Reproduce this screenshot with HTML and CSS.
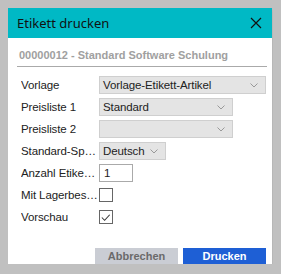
FILE: index.html
```html
<!DOCTYPE html>
<html>
<head>
  <title>Etikett drucken</title>
  <link rel="stylesheet" href="styles.css">
</head>
<body>

<div class="dialog">
  <div class="head">
    <span class="title">Etikett drucken</span>
    <svg class="close" width="12" height="12" viewBox="0 0 12 12">
      <path d="M1 1 L11 11 M11 1 L1 11" stroke="#111" stroke-width="1.2" fill="none"/>
    </svg>
  </div>

  <div class="content">
    <div class="subtitle">00000012 - Standard Software Schulung</div>

    <div class="form">
      <div class="row">
        <span class="label">Vorlage</span>
        <div class="select wide">
          <span>Vorlage-Etikett-Artikel</span>
          <svg class="chev" width="8" height="5" viewBox="0 0 8 5"><path d="M0.5 0.5 L4 4 L7.5 0.5" stroke="#999" fill="none"/></svg>
        </div>
      </div>
      <div class="row">
        <span class="label">Preisliste 1</span>
        <div class="select mid">
          <span>Standard</span>
          <svg class="chev" width="8" height="5" viewBox="0 0 8 5"><path d="M0.5 0.5 L4 4 L7.5 0.5" stroke="#999" fill="none"/></svg>
        </div>
      </div>
      <div class="row">
        <span class="label">Preisliste 2</span>
        <div class="select mid">
          <span></span>
          <svg class="chev" width="8" height="5" viewBox="0 0 8 5"><path d="M0.5 0.5 L4 4 L7.5 0.5" stroke="#999" fill="none"/></svg>
        </div>
      </div>
      <div class="row">
        <span class="label">Standard-Sprache</span>
        <div class="select small">
          <span>Deutsch</span>
          <svg class="chev" width="8" height="5" viewBox="0 0 8 5"><path d="M0.5 0.5 L4 4 L7.5 0.5" stroke="#999" fill="none"/></svg>
        </div>
      </div>
      <div class="row">
        <span class="label">Anzahl Etiketten</span>
        <div class="input">1</div>
      </div>
      <div class="row">
        <span class="label">Mit Lagerbestand</span>
        <div class="check"></div>
      </div>
      <div class="row">
        <span class="label">Vorschau</span>
        <div class="check">
          <svg width="13" height="13" viewBox="0 0 13 13"><path d="M2 6.5 L5 9.5 L10.5 3.5" stroke="#333" stroke-width="1.1" fill="none"/></svg>
        </div>
      </div>
    </div>
  </div>

  <div class="buttons">
    <button class="btn cancel">Abbrechen</button>
    <button class="btn print">Drucken</button>
  </div>
</div>

</body>
</html>
```

FILE: styles.css
```css
body {
  margin: 8px;
  background-color: #c0c0c0;
  font-family: "Liberation Sans", Arial, sans-serif;
}

.dialog {
  width: 264px;
  height: 256px;
  background-color: #fff;
  display: flex;
  flex-direction: column;
  box-shadow: 0px 2px 3px rgba(0, 0, 0, 0.12);
}

.head {
  height: 30px;
  background-color: #00b9c5;
  display: flex;
  align-items: center;
  justify-content: space-between;
  padding: 0 10px 0 9px;
}

.title {
  font-family: "Noto Sans", sans-serif;
  font-size: 13px;
  color: #111;
}

.content {
  flex: 1;
  padding: 0 5px 0 9px;
}

.subtitle {
  font-size: 11px;
  font-weight: bold;
  color: #a0a0a0;
  padding: 11px 0 5px 2px;
  border-bottom: 1px solid #aaa;
}

.form {
  margin-top: 7px;
  padding-left: 4px;
}

.row {
  height: 22px;
  display: flex;
  align-items: center;
}

.label {
  width: 77px;
  margin-right: 1px;
  font-size: 11.5px;
  letter-spacing: -0.1px;
  color: #222;
  white-space: nowrap;
  overflow: hidden;
  text-overflow: ellipsis;
}

.select {
  height: 18px;
  box-sizing: border-box;
  background-color: #e4e4e4;
  border: 1px solid #cfcfcf;
  display: flex;
  align-items: center;
  justify-content: space-between;
  padding: 0 7px 0 3px;
  font-size: 11.5px;
  letter-spacing: -0.1px;
  color: #222;
}

.wide { width: 167px; }
.mid { width: 134px; }
.small { width: 67px; }

.input {
  width: 34px;
  height: 18px;
  box-sizing: border-box;
  border: 1px solid #aaa;
  font-size: 11.5px;
  color: #222;
  padding: 2px 4px;
}

.check {
  width: 14px;
  height: 14px;
  box-sizing: border-box;
  border: 1px solid #666;
  display: flex;
  align-items: center;
  justify-content: center;
}

.buttons {
  display: flex;
  justify-content: flex-end;
  gap: 5px;
  padding-right: 6px;
}

.btn {
  width: 83px;
  height: 16px;
  border: none;
  margin: 0;
  padding: 0;
  font-family: "Liberation Sans", Arial, sans-serif;
  font-size: 11px;
  font-weight: bold;
}

.cancel {
  background-color: #cacdd4;
  color: #6a6a6a;
}

.print {
  background-color: #1e5fd5;
  color: #fff;
}
```
